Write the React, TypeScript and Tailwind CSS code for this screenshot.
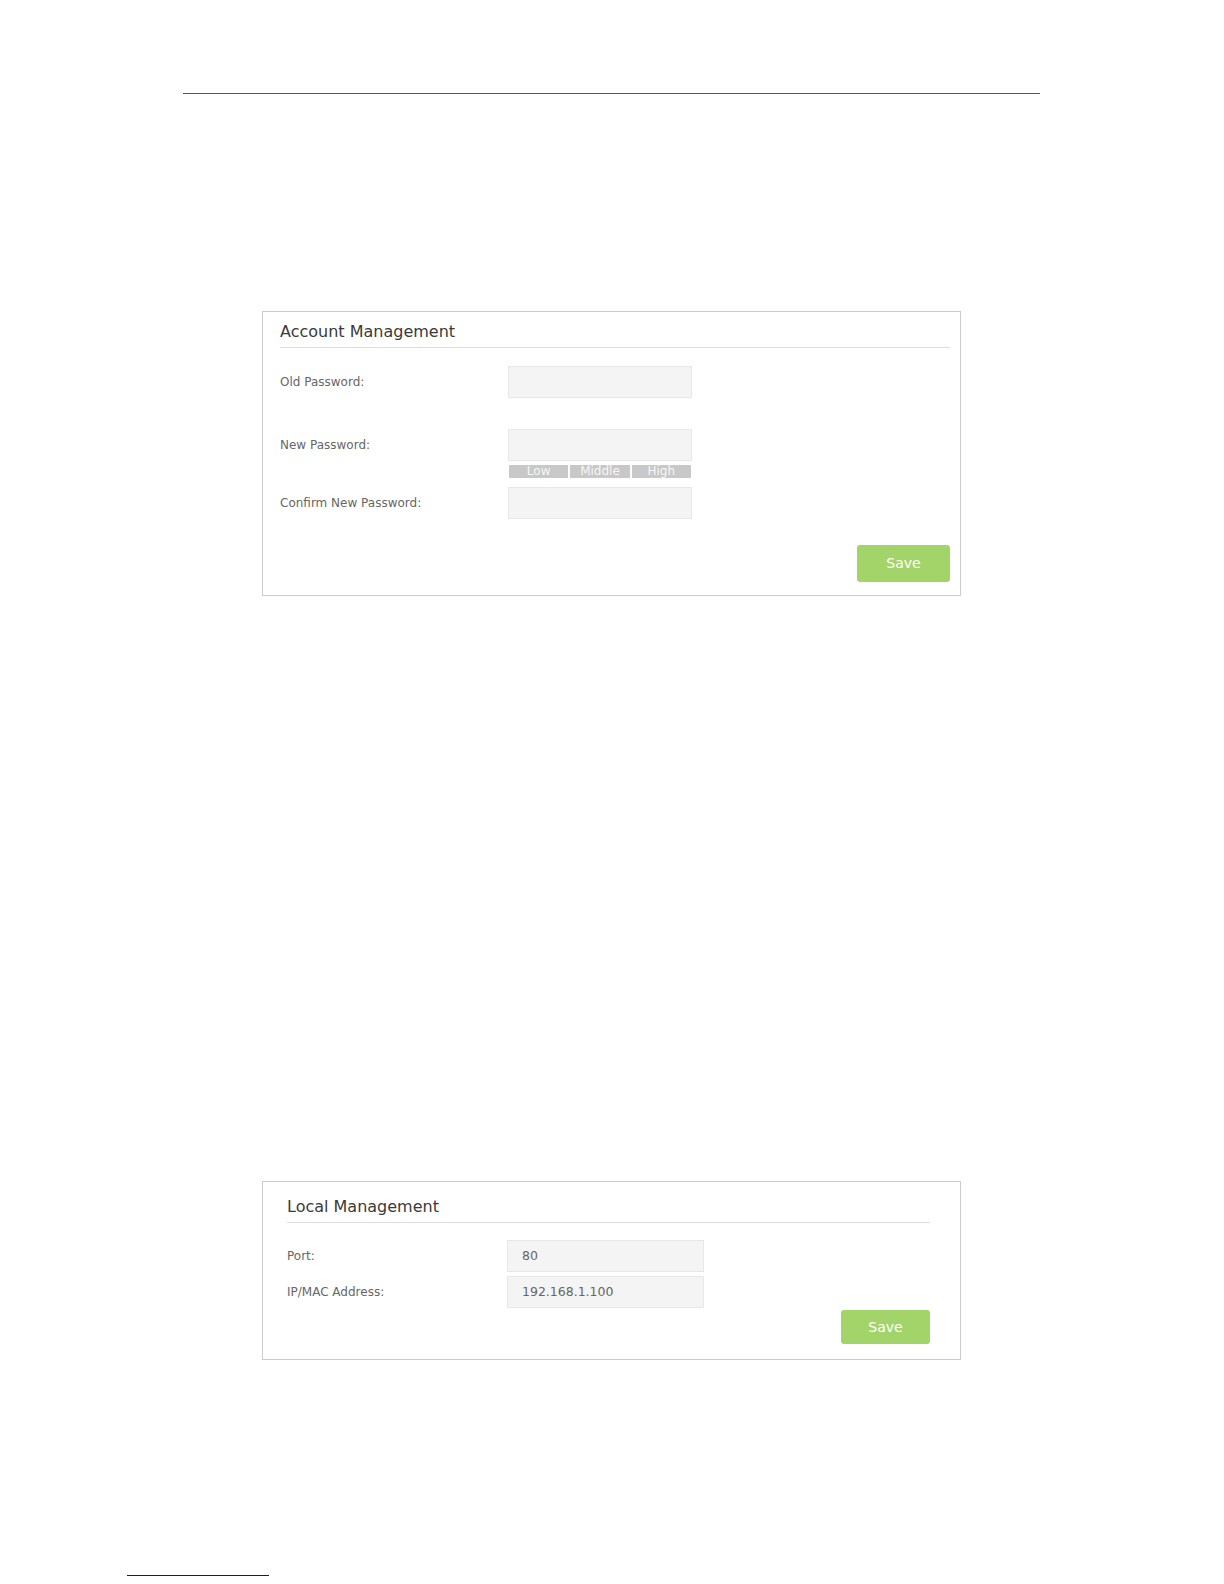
const font = { fontFamily: '"DejaVu Sans", Verdana, sans-serif' };

const Field = ({ value }: { value?: string }) => (
  <div className="flex h-[32px] items-center border border-[#e8e8e8] bg-[#f4f4f4] pl-[14px] text-[12.5px] text-[#666]">
    {value}
  </div>
);

const SaveButton = ({ className }: { className: string }) => (
  <button className={`rounded-[3px] bg-[#a2d46a] text-[14px] text-white ${className}`}>Save</button>
);

const AccountManagement = () => (
  <section className="ml-[262px] mt-[217px] w-[699px] border border-[#cccccc] pb-[13px] pl-[17px] pr-[10px] pt-[10px]">
    <h2 className="mb-[5px] text-[16px] leading-[20px] text-[#3a3a3a]">Account Management</h2>
    <div className="h-px bg-[#dddddd]" />

    <div className="mt-[18px] grid grid-cols-[228px_184px] items-center">
      <span className="text-[12px] text-[#666]">Old Password:</span>
      <Field />
    </div>

    <div className="mt-[31px] grid grid-cols-[228px_184px] items-center">
      <span className="text-[12px] text-[#666]">New Password:</span>
      <Field />
    </div>
    {/* strength meter */}
    <div className="ml-[229px] mt-[4px] flex h-[13px] w-[182px] gap-[2px] text-[12px] leading-[13px] text-[#f6f6f6]">
      <div className="flex-1 bg-[#c8c8c8] text-center">Low</div>
      <div className="flex-1 bg-[#c8c8c8] text-center">Middle</div>
      <div className="flex-1 bg-[#c8c8c8] text-center">High</div>
    </div>

    <div className="mt-[9px] grid grid-cols-[228px_184px] items-center">
      <span className="text-[12px] text-[#666]">Confirm New Password:</span>
      <Field />
    </div>

    <div className="mt-[26px] flex justify-end">
      <SaveButton className="h-[37px] w-[93px]" />
    </div>
  </section>
);

const LocalManagement = () => (
  <section className="ml-[262px] mt-[585px] w-[699px] border border-[#cccccc] pb-[15px] pl-[24px] pr-[30px] pt-[15px]">
    <h2 className="mb-[5px] text-[16px] leading-[20px] text-[#3a3a3a]">Local Management</h2>
    <div className="h-px bg-[#dddddd]" />

    <div className="mt-[17px] grid grid-cols-[220px_197px] items-center">
      <span className="text-[12px] text-[#666]">Port:</span>
      <Field value="80" />
    </div>
    <div className="mt-[4px] grid grid-cols-[220px_197px] items-center">
      <span className="text-[12px] text-[#666]">IP/MAC Address:</span>
      <Field value="192.168.1.100" />
    </div>

    <div className="mt-[2px] flex justify-end">
      <SaveButton className="h-[34px] w-[89px]" />
    </div>
  </section>
);

export default function App() {
  return (
    <div className="min-h-[1584px] w-[1224px] bg-white" style={font}>
      <div className="pl-[183px] pt-[93px]">
        <div className="h-px w-[857px] bg-[#555]" />
      </div>

      <AccountManagement />
      <LocalManagement />

      <div className="ml-[127px] mt-[215px] h-px w-[142px] bg-[#10108c]" />
    </div>
  );
}
